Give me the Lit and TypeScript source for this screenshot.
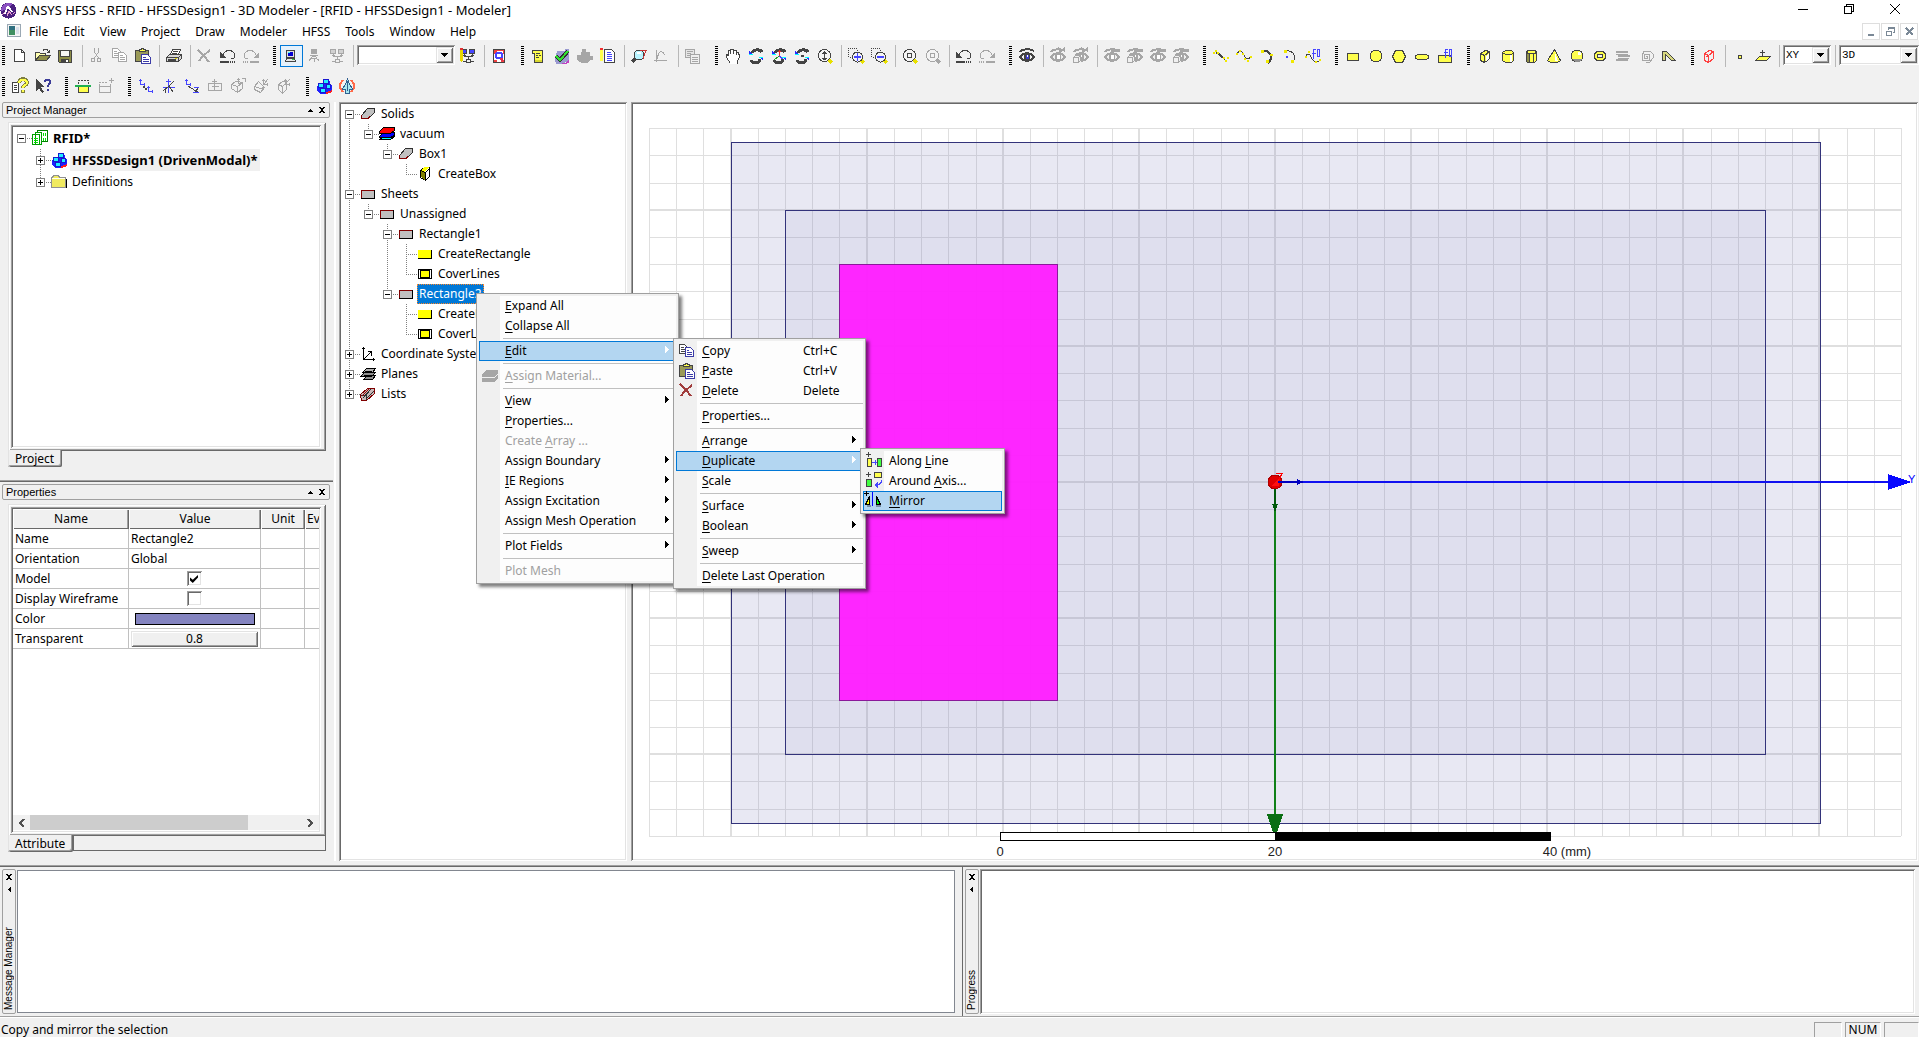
import { LitElement, html, svg, css, nothing } from "lit";
import { customElement, property, state } from "lit/decorators.js";
import { classMap } from "lit/directives/class-map.js";

const K = "#444444";
const G = "#a6a6a6";
const Y = "#ffff4d";
const B = "#4646ff";
const N = "none";

/* One stroked and optionally filled outline on the 16 x 16 icon canvas. */
const p = (d: string, stroke: string = K, fill: string = N, width = 1) =>
  svg`<path d=${d} stroke=${stroke} fill=${fill} stroke-width=${width} />`;

/* A small axis triad: upright and level arms with barbed tips. */
const axes = (x: number, y: number, c: string) =>
  svg`<path d="M${x} ${y - 5}h1v5h4v1h-5zM${x - 1} ${y - 4}h3v1h-3zM${x + 4} ${y - 1}h1v3h-1z" fill=${c} />`;

const eye = (c: string, iris: string, extra: unknown = nothing) => svg`
  ${p("M1 4c2-3 10-4 14-1", c, N, 2)}
  ${p("M1 9c3-5 11-5 14 0c-3 5-11 5-14 0z", c, "#f0f0f0", 2)}
  <circle cx="8" cy="9" r="3" fill=${c} />
  <rect x="7" y="7" width="3" height="4" fill=${iris} />
  <rect x="8" y="7" width="1" height="2" fill="#ffffff" />
  ${extra}`;

const eyeCross = p("M8 0l3 3M15 0l-7 6", G, N, 2);
const eyeBox = svg`<rect x="0" y="7" width="8" height="8" fill="#f0f0f0" />${p("M.5 9.5h5v5h-5zM.5 9.5l2-2h5v5l-2 2M5.5 9.5l2-2", G)}`;

const spin = (extra: unknown) => svg`
  ${p("M4 5c1-4 8-4 10-1", K, N, 3)}
  ${p("M3 12c2 4 9 4 9-1", K, N, 3)}
  <path d="M1 3v4h4z" fill="#2a2aff" /><path d="M1 6h4v1h-4z" fill="#00ffff" />
  <path d="M15 13v-4h-4z" fill="#2a2aff" /><path d="M11 9h4v1h-4z" fill="#00ffff" />
  ${extra}`;

const lens = (extra: unknown, c = K, handle = "#e8e000") => svg`
  ${p("M11 11l4 4", handle, N, 3)}
  <circle cx="7.500" cy="7.500" r="6" stroke=${c} fill="#f4f4f4" />
  ${extra}`;

const undo = (c: string) =>
  svg`${p("M3 7c2-6 10-6 12 0c0 3-2 4-4 4", c)}<path d="M0 4v6h6z" fill=${c} />${p("M0 14h9", c, N, 2)}${p("M10 14h6", c, N, 2)}<path d="M11 13v2M13 13v2M15 13v2" stroke="#f0f0f0" />`;
const redo = (c: string) =>
  svg`${p("M13 7c-2-6-10-6-12 0c0 3 2 4 4 4", c)}<path d="M16 4v6h-6z" fill=${c} />${p("M0 14h6", c, N, 2)}${p("M7 14h9", c, N, 2)}<path d="M1 13v2M3 13v2M5 13v2" stroke="#f0f0f0" />`;

const sheet = (x: number, y: number, c: string) =>
  svg`${p(`M${x}.5 ${y}.5h5l3 3v6h-8z`, c, "#ffffff")}${p(`M${x + 2} ${y + 3}.5h3M${x + 2} ${y + 5}.5h5M${x + 2} ${y + 7}.5h5`, c)}`;

const clipboard = svg`
  ${p("M.5 2.5h13v11h-13z", K, "#9a9a58")}
  ${p("M4.5 3.5v-2h2v-1h2v1h2v2z", K, Y)}
  ${p("M6.5 6.5h6l3 3v6h-9z", "#3c3ca8", "#ffffff")}${p("M8 9.5h3M8 11.5h6M8 13.5h6", "#3c3ca8")}`;

const pcs = (c: string, screen: string) => svg`
  ${p("M1.5 1.5h5v4h-5zM9.5 1.5h5v4h-5z", c, screen)}
  ${p("M4.5 6v2h8v-2M8.5 8v3M3 7.5h3M11 7.5h3", c)}${p("M6.5 11.5h4v3h-4z", c, "#f0f0f0")}${p("M3 13.5h3M11 13.5h3", c)}`;

const molecule = svg`
  <path d="M1 8h6v-5h7v4h2v6l-5 3h-6l-4-3z" fill="#2020ff" />
  <path d="M9 15l7-3v2l-5 2z" fill="#ff2020" />
  <path d="M8 2h4v3h-4zM3 6h4v3h-4zM11 7h4v3h-4zM5 11h4v3h-4z" fill="#20f0ff" />
  ${p("M7.5 1.5h5v4h-5zM2.5 5.5h5v4h-5zM10.5 6.5h4v4h-4zM4.5 10.5h5v4h-5z", "#1818d0")}`;

const zoomBox = (mark: unknown) => svg`
  <path d="M0 0h1v1h-1zM2 0h1v1h-1zM4 0h1v1h-1zM6 0h1v1h-1zM8 0h1v1h-1zM0 2h1v1h-1zM0 4h1v1h-1zM0 6h1v1h-1zM0 8h1v1h-1zM9 2h1v1h-1zM2 9h1v1h-1zM4 9h1v1h-1z" fill=${K} />
  ${p("M13 12l3 3", "#e8e000", N, 3)}<circle cx="9.500" cy="9" r="5" fill="#f4f4f4" stroke=${K} />${mark}`;

const icons: Record<string, unknown> = {
  newFile: p("M2.5 1.5h7l3 3v9h-10zM9.5 1.5v3h3", K, "#ffffff"),
  open: svg`${p("M.5 12.5v-8h4l1 1h5v3", K, "#ffffb0")}${p("M.5 12.5l4-5h11l-4 5z", K, "#90904a")}${p("M8 2.5c2-2 4-2 5.500 1", K)}<path d="M15 1v4h-4z" fill=${K} />`,
  save: svg`${p("M.5 2.500h13v12h-12l-1-1z", K, "#8c8c48")}<path d="M3 3h8v5h-8z" fill="#f6f6f6" />${p("M2.500 3v5.500h9v-5.500", K)}<path d="M3 11h8v3h-8z" fill=${K} /><path d="M8 12h2v2h-2z" fill="#fff" />`,
  cut: svg`${p("M5.500 0v4l4 6M9.500 0v4l-4 6", G)}<circle cx="4" cy="12" r="2" stroke=${G} fill="none" /><circle cx="10" cy="12" r="2" stroke=${G} fill="none" />`,
  copyGrey: svg`${sheet(0, 0, G)}${sheet(6, 4, G)}`,
  copy: svg`${sheet(0, 1, K)}${p("M6.500 4.500h5l3 3v6h-8z", "#3c3ca8", "#ffffff")}${p("M8 7.500h2M8 9.500h5M8 11.500h5", "#3c3ca8")}`,
  paste: clipboard,
  remove: svg`${p("M1 1l6 6l5 6M13 2l-7 6l-4 5", "#a03c3c", N, 2)}`,
  print: svg`${p("M4.500 6.500l2-5h8l-2 5z", K, "#fff")}${p("M7 3.500h5M6 5.500h5", K)}${p("M.500 9.500l3-3h12v4l-3 3h-12z", K, "#d8d8d8")}${p("M.500 9.500h12l3-3M12.500 9.500v4", K)}${p("M2 11.500h8", K, N, 2)}<path d="M9 10h2v1h-2z" fill="#e8e000" />`,
  crossGrey: p("M1 2l6 6l5 6M13 2l-7 6l-4 5", G, N, 2),
  undo: undo(K),
  redo: redo(G),
  pc: svg`${p("M3.500 2.500h8v7h-8z", K, "#e0e0e0")}<path d="M5 4h5v4h-5z" fill="#0000d0" /><path d="M5 4h2v1h-2z" fill="#30ffff" />${p("M2.500 13.500l1-3h8l1 3z", K, "#e8e8e8")}<path d="M9 11h2v1h-2z" fill="#30d040" />`,
  pcWifi: svg`${p("M5.500 1.500h5v4h-5z", G, G)}${p("M4 7.500h8M5 10c1-2 5-2 6 0M3 13c2-4 8-4 10 0M8 10v4", G)}`,
  pcNet: pcs(G, "#d0d0d0"),
  pcEdit: svg`${pcs(K, B)}<path d="M0 2h3v10l-1 3l-2-3z" fill="#e8d800" /><path d="M0 0h3v2h-3z" fill="#e03030" />`,
  opt: svg`${p("M2.500 1.500h11v13h-11z", K, "#fff")}<path d="M3 2h10v1h-7l-2 3h-1zM12 3h1v3h-1zM3 12h3v2h-3zM10 12h3v2h-3z" fill="#f04040" /><circle cx="8" cy="7.500" r="3" stroke=${B} stroke-width="2" fill="#fff" /><path d="M9 10h3v3h-2z" fill="#e03050" />`,
  script: svg`${p("M1.500 2.500h10v12h-8v-9h-2z", K, Y)}${p("M5 5.500h4M5 7.500h2M8 7.500h2M5 9.500h3", K)}<path d="M4 12h7v2h-7z" fill="#d8d830" />`,
  validate: svg`<path d="M3 3h8v-2h4v12l-8 3h-5l-1-5z" fill="#9a9ad0" /><path d="M5 15h6l4-3v3l-4 1z" fill="#c040c0" />${p("M2 8l4 4l8-9", "#303030", N, 4)}${p("M2 8l4 4l8-9", "#30e030", N, 2)}`,
  solveGrey: svg`<path d="M5 1h4v3h4v4h3v4h-3l-3 3h-5l-5-3v-5h4z" fill=${G} />`,
  notes: svg`${p("M4.500 1.500h7l3 3v10h-10z", K, "#fff")}${p("M7 4.500h4M7 6.500h5M7 8.500h5M7 10.500h5M7 12.500h5", B)}<path d="M0 2h3v11h-3z" fill=${Y} /><path d="M0 0h3v2h-3z" fill="#f03030" />`,
  find: svg`${p("M1 14l4-4", K, N, 4)}<circle cx="8" cy="7" r="5" stroke=${K} fill="#b8f4ff" /><path d="M6 4h4v2h-4z" fill="#fff" />${p("M9 2.500h6l-3 8", "#c83838")}`,
  plot: svg`${p("M2.500 2v12M0 12.500h13M3 11c2-9 5-9 8-4", G)}`,
  cascade: svg`${p("M.500 1.500h9v8h-9z", G, "#e6e6e6")}${p("M2 3.500h6M2 5.500h4M2 7.500h3", G)}${p("M5.500 6.500h9v9h-9z", G, "#f0f0f0")}${p("M7 9.500h6M7 11.500h6M7 13.500h6", G)}`,
  hand: p("M5.500 15.500l-4-6v-3l2 1v-5h2v3v-4h3v4v-3h3v4v-2h2l1 4l-2 5v2", K, "#fff"),
  rotate: spin(nothing),
  rotateAxis: spin(svg`${p("M8.500 8v-6M7 3.500h3", "#e03030")}${p("M8 8l-5 4", "#20a020")}${p("M8 8l4 3", B)}`),
  rotateCenter: spin(svg`<path d="M7 7h3v2h-3z" fill=${K} />`),
  zoomDyn: lens(svg`<path d="M7 3h1v1h1v1h1v1h-5v-1h1v-1h1zM7 6h1v4h-1zM5 10h5v1h-1v1h-3v-1h-1z" fill=${K} />`),
  zoomIn: zoomBox(svg`<path d="M6 8h7v2h-7zM9 5h1v8h-1z" fill=${B} />`),
  zoomOut: zoomBox(svg`<path d="M6 8h7v2h-7z" fill=${B} />`),
  fitAll: lens(p("M5.500 5.500h4v4h-4z", K)),
  fitSel: lens(p("M5.500 5.500h4v4h-4z", G), G, G),
  eye: eye(K, "#3c3cc8"),
  eyeX: eye(G, "#ffffff", eyeCross),
  eyeBoxX: eye(G, G, svg`${eyeCross}${eyeBox}`),
  eyeG: eye(G, "#ffffff", p("M7 2h9", G, N, 3)),
  eyeBoxG: eye(G, G, svg`${p("M7 2h9", G, N, 3)}${eyeBox}`),
  line: svg`${p("M3 4l9 7", K, N, 2)}<path d="M0 4h2v2h-2zM2 2h2v2h-2zM4 4h2v2h-2zM10 9h2v2h-2zM12 12h2v2h-2zM14 9h2v2h-2z" fill="#f0e800" />`,
  spline: svg`${p("M1 6c3-6 5-3 7 1s4 6 7 1", K)}<path d="M0 5h2v2h-2zM3 2h2v2h-2zM6 5h2v2h-2zM8 10h2v2h-2zM11 12h2v2h-2zM14 8h2v2h-2z" fill="#f0e800" />`,
  arc3: svg`${p("M4 3c7-1 11 7 5 12", K, N, 2)}<path d="M2 2h3v3h-3zM11 6h3v2h-3zM7 12h3v3h-3z" fill="#f0e800" />`,
  arcC: svg`${p("M4 3c8-1 11 7 6 12", K)}<path d="M2 2h3v3h-3zM9 12h3v3h-3z" fill="#f0e800" /><path d="M4 8h2v2h-2z" fill=${B} />`,
  curveEq: svg`${p("M0 10c2-6 5-4 6-1s4 6 8 4", K)}${p("M8.500 11v-9l2-1M7 5.500h4M12.500 1.500h2v7h-2z", B)}<path d="M0 8h2v2h-2zM3 3h2v2h-2zM10 13h2v2h-2zM14 11h2v2h-2z" fill="#f0e800" />`,
  rect: p("M2.500 5.500h11v7h-11z", K, Y),
  circle: svg`<circle cx="8" cy="8" r="6" stroke=${K} fill=${Y} />`,
  polygon: p("M4.500 2.500h7l3 6l-3 6h-7l-3-6z", K, Y),
  ellipse: svg`<ellipse cx="8" cy="9" rx="7" ry="3" stroke=${K} fill=${Y} />`,
  surfEq: svg`${p("M1.500 7.500h13v7h-13z", K, Y)}${p("M8.500 10v-8l2-1M7 4.500h4M12.500 1.500h2v7h-2z", B)}`,
  box: svg`${p("M3.500 5.500l5-3l4 1v7l-5 4l-4-2z", K, Y)}${p("M3.500 5.500l4 2l5-4M7.500 7.500v7", K)}<path d="M9 8l3-3v5l-3 3z" fill="#fff" />`,
  cylinder: svg`${p("M2.500 4.500l3-2h6l2 2v8l-2 2h-6l-3-2z", K, Y)}${p("M2.500 4.500l3 2h6l2-2", K)}<path d="M10 7h2v7h-2z" fill="#fff" />`,
  prism: svg`${p("M3.500 3.500l2-1h6l2 1v9l-2 2h-6l-2-1z", K, Y)}${p("M3.500 4.500l2 1h6l2-1M6.500 6v8M10.500 6v8", K)}<path d="M4 6h2v8h-2z" fill="#909048" />`,
  cone: svg`${p("M8.500 1.500l6 11l-3 2h-7l-3-2z", K, Y)}<path d="M9 5l3 8h-3z" fill="#fff" />`,
  sphere: svg`<circle cx="8" cy="8" r="6" stroke=${K} fill=${Y} /><path d="M3 11h10l-3 3h-4z" fill="#909090" /><path d="M9 4h3v3h-3z" fill="#fff" />`,
  torus: svg`<ellipse cx="8" cy="8" rx="6" ry="5" stroke=${K} fill=${Y} /><ellipse cx="8" cy="8" rx="3" ry="2" stroke=${K} fill="#f0f0f0" />`,
  stackGrey: svg`${p("M1 4h12M3 8h12M1 12h12", G, N, 2)}${p("M1 6.500h12M3 10.500h11", G)}`,
  spiral: p("M8 8h1v2h-3v-4h5v6h-7v-4l2-5h6l3 3v4l-3 4h-4", G),
  sweep: svg`${p("M1.500 12.500v-9h4l9 9h-4l-6-6v6z", K, "#d8d880")}`,
  boxRed: p("M3.500 5.500l5-3l4 1v7l-5 4l-4-2zM3.500 5.500l4 2l5-4M7.500 7.500v7M5.500 9l4-3", "#ff4040"),
  point: p("M6.500 7.500h3v3h-3z", K, Y),
  plane: svg`${p("M4.500 8.500h11l-4 4h-11z", K, Y)}${p("M7.500 9v-7M5 4.500h5", K)}`,
  help: svg`${p("M.500 4.500h6v10h-6z", K, "#fff")}${p("M2 7.500h3M2 9.500h3M2 11.500h3", K)}${p("M7 5c0-5 8-5 8 0c0 2-4 2-4 5M11 12v3", "#808040", N, 4)}${p("M7 5c0-4 8-4 8 0c0 2-4 2-4 5M11 12v2", Y, N, 2)}`,
  whatsThis: svg`<path d="M1 1v12l3-3l3 5l2-1l-3-5h4z" fill=${K} />${p("M10 4c0-3 5-3 5 0c0 2-2 2-2 5M13 11v2", "#3c3c98", N, 2)}`,
  region: svg`<path d="M4 9h10v6h-10z" fill=${Y} />${p("M3 14.500h10.500v-5.500M3.500 9v5", K)}<path d="M3 2h2v1h-2zM6 2h2v1h-2zM9 2h2v1h-2zM12 2h2v1h-2zM3 4h1v2h-1zM13 4h1v2h-1z" fill=${K} />${p("M0 8h16", "#20b050", N, 2)}`,
  regionGrey: svg`${p("M1.500 14.500h11v-6h-11z", G)}<path d="M1 4h2v1h-2zM4 4h2v1h-2zM7 4h2v1h-2zM1 6h1v2h-1zM12 6h1v2h-1zM13 0h1v5h-1zM11 2h5v1h-5z" fill=${G} />`,
  cs1: svg`${axes(2, 6, B)}${axes(10, 13, B)}<path d="M5 8h2v2h-2zM7 10h2v2h-2z" fill=${K} />`,
  cs2: svg`<path d="M7 1h1v14h-1zM5 3h5v1h-5zM2 9h12v1h-12z" fill=${B} />${p("M2 13l6-5M8 8l5-5M8 8l4 6M4.500 11v4", K)}`,
  cs3: svg`${axes(2, 6, B)}${p("M4 8l11 7M15 9l-5 6", K)}<path d="M10 9h5v1h-5zM9 14h6v1h-6z" fill=${B} />`,
  cs4: svg`${p("M1.500 5.500h13v7h-13z", G)}<path d="M7 1h1v11h-1zM5 3h5v1h-5zM5 8h7v1h-7z" fill=${G} />`,
  cs5: svg`${p("M1.500 6.500l4-3h4l3 2v5l-5 4l-6-4zM1.500 6.500l6 2l4-3M7.500 8.500v6", G)}${axes(8, 5, G)}<path d="M12 0h4v1h-4zM15 0h1v4h-1z" fill=${G} />`,
  cs6: svg`${p("M1.500 8.500l4-5l6 6l-4 5l-6-3zM1.500 8.500l6 2l4-1M11 6l4-5", G)}${axes(10, 6, G)}`,
  cs7: svg`${p("M2.500 6.500l4-3h4v8l-4 4l-4-4zM2.500 6.500l4 2l4-4M6.500 8.500v6M6 9l8-8", G)}${axes(9, 6, G)}`,
  molecule,
  jet: svg`${p("M4 2l-3 4v4l3 4M12 2l3 4v4l-3 4", "#ff6a4a", N, 2)}${p("M8.500 1l2 5l3 5h-3v4h-4v-4h-3l3-5z", "#306090", "#a8e8f0")}${p("M8.500 3v10", "#306090")}`,
  project: svg`${p("M5.500 .500h10v11h-10z", "#008000", "#ffffff")}${p("M3.500 2.500h6v12h-6zM.500 4.500h7v10h-7z", "#00a000", "#ffffff")}${p("M2 8.500h4M2 10.500h4M2 12.500h4M11.500 3v3M13.500 3v3M11.500 8v3M13.500 8v3", "#00e000")}`,
  folder: svg`<path d="M2 14h14v-9h-1z" fill="#000" />${p("M.500 3.500h1l1-2h5l1 2h6v10h-14z", "#909090", "#f0ea60")}<path d="M1 4h13v1h-13z" fill="#fffff0" />`,
  solid: svg`${p("M1.500 12.500v-3l6-7h7v4l-6 6z", "#303030", "#c0c0c0")}${p("M1.500 13v-4M1 12.500h7l2-2", "#800000")}`,
  vacuum: svg`${p("M.500 13.500l4-3h11l-4 3z", "#000", "#00ffff")}${p("M.500 10.500l4-4h11v3l-4 2h-11z", "#000", "#0000ff")}${p("M.500 5.500l4-4h11v3l-4 3h-11z", "#000", "#ff0000")}`,
  createBox: svg`${p("M3.500 4.500l4-3h5v9l-4 4l-5-3z", "#000", "#fff")}<path d="M4 5l4 2v7l-4-3z" fill="#808000" /><path d="M4 4l4-3h4l-4 5z" fill="#ffff00" />${p("M3.500 4.500l5 2l4-4M8.500 6.500v8", "#000")}`,
  sheet: svg`<path d="M1 4h14v9h-14z" fill="#000" /><path d="M1 4h13v8h-13z" fill="#800000" /><path d="M2 5h12v7h-12z" fill="#c0c0c0" />`,
  createRect: svg`<path d="M1 4h14v9h-14z" fill="#000" /><path d="M1 4h13v8h-13z" fill="#ffff00" />`,
  cover: svg`<path d="M1 3h14v10h-14z" fill="#000" /><path d="M2 4h12v8h-12z" fill="#fff" /><path d="M3 4h10v8h-10z" fill="#000" /><path d="M4 5h8v6h-8z" fill="#ffff00" />`,
  coords: svg`<path d="M3 1h1v12h11v1h-12zM2 2h3v1h-3zM13 12h1v3h-1z" fill="#000" />${p("M4 13l7-7M8 5.500h3.500v4", "#000")}`,
  planes: svg`${p("M3.500 13.500l4-4h8l-3 4zM.500 10.500l4-4h11l-4 4z", "#000", "#909090")}${p("M2.500 6.500l4-4h9l-3 4z", "#000", "#b0b0b0")}${p("M5 5.500h7M4 9h8", "#000")}`,
  lists: svg`${p("M.500 8.500l7-6h7v5l-8 7h-5z", "#800000", "#c8b8b8")}${p("M3 12l8-9M6 13l8-8M1 9h5v5", "#303030")}${p("M2 10l7-7", "#a00000")}`,
  materialGrey: svg`<path d="M0 7l4-5h12v3l-4 4h-12zM0 14v-4h12l4-4v4l-4 4z" fill=${G} />`,
  alongLine: svg`<path d="M2 -1h1v5h-1zM0 1h5v1h-5z" fill=${K} />${p("M1.500 5.500h4v8h-4z", K, Y)}${p("M11.500 5.500h4v8h-4z", K, "#40ff40")}<path d="M6 9h5v1h-5zM9 7h1v5h-1z" fill=${B} />`,
  aroundAxis: svg`<path d="M2 -1h1v5h-1zM0 1h5v1h-5z" fill=${K} />${p("M8.500 -.500h7v5h-7z", K, Y)}${p("M.500 6.500h5v7h-5z", K, "#40ff40")}${p("M15.500 7c0 4-3 5-6 5", B)}<path d="M8 12l4-3v6z" fill=${B} />`,
  mirror: svg`<path d="M3 12h4v2h-4zM12 12h5v2h-5z" fill="#7890a8" />${p("M5.500 3.500v8h-4z", "#000", "#ffff00")}${p("M12.500 3.500v8h4z", "#000", "#00ff00")}<path d="M2 -2h1v5h-1zM0 0h5v1h-5z" fill="#000" /><path d="M8 -1h1v14h-1z" fill="#0000ff" />`,
};

const icon = (name: string) =>
  html`<svg class="icon" viewBox="0 0 16 16" aria-hidden="true">${icons[name]}</svg>`;

const caret = svg`<path d="M0 0h7v1h-1v1h-1v1h-1v1h-1v-1h-1v-1h-1v-1h-1z" fill="#000" />`;

const shared = css`
  * {
    box-sizing: border-box;
  }
  button,
  select,
  input {
    font: inherit;
    color: inherit;
    margin: 0;
    padding: 0;
    border: 0;
    background: none;
    border-radius: 0;
  }
  ul {
    list-style: none;
    margin: 0;
    padding: 0;
  }
  svg {
    display: block;
    shape-rendering: crispEdges;
    fill: none;
    flex: none;
  }
  .icon {
    width: 16px;
    height: 16px;
    overflow: visible;
  }
  .sunken {
    padding: 2px;
    background: #fff;
    box-shadow: inset 1px 1px #a0a0a0, inset -1px -1px #fff, inset 2px 2px #696969,
      inset -2px -2px #e3e3e3;
  }
  .raised {
    background: #f0f0f0;
    box-shadow: inset 1px 1px #e3e3e3, inset -1px -1px #696969, inset 2px 2px #fff,
      inset -2px -2px #a0a0a0;
  }
`;

type Tool = string | { options: string[]; label: string; kind: string };

const toolRows: Tool[][][] = [
  [
    ["newFile", "open", "save", "|", "cut", "copyGrey", "paste", "|", "print", "|", "crossGrey", "undo", "redo"],
    ["pc", "pcWifi", "pcNet", "|", { options: [""], label: "Machine", kind: "wide" }, "pcEdit", "|", "opt"],
    ["script", "validate", "solveGrey", "notes", "|", "find", "plot", "|", "cascade"],
    ["hand", "rotate", "rotateAxis", "rotateCenter", "zoomDyn", "|", "zoomIn", "zoomOut", "|", "fitAll", "fitSel", "|", "undo", "redo"],
    ["eye", "|", "eyeX", "eyeBoxX", "|", "eyeG", "eyeBoxG", "eyeG", "eyeBoxG"],
    ["line", "spline", "arc3", "arcC", "curveEq"],
    ["rect", "circle", "polygon", "ellipse", "surfEq"],
    ["box", "cylinder", "prism", "cone", "sphere", "torus", "stackGrey", "spiral", "sweep"],
    [
      "boxRed", "|", "point", "plane", "|",
      { options: ["XY", "YZ", "XZ"], label: "Drawing plane", kind: "plane" }, "|",
      { options: ["3D", "In Plane", "Out of Plane"], label: "Movement mode", kind: "mode" },
    ],
  ],
  [
    ["help", "whatsThis"],
    ["region", "regionGrey"],
    ["cs1", "cs2", "cs3", "cs4", "cs5", "cs6", "cs7"],
    ["molecule", "jet"],
  ],
];

@customElement("tool-bars")
export class ToolBars extends LitElement {
  static styles = [
    shared,
    css`
      :host {
        display: block;
        background: #f1f1f1;
      }
      .row {
        display: flex;
        gap: 10px;
        height: 30px;
        padding-left: 2px;
        align-items: center;
      }
      .row:first-child {
        height: 31px;
      }
      .group {
        display: flex;
        align-items: center;
        flex: none;
      }
      .group.last {
        flex: 1 1 auto;
      }
      .grip {
        flex: none;
        width: 3px;
        height: 19px;
        margin-right: 4px;
        background: repeating-linear-gradient(#000 0 1px, transparent 1px 2px);
      }
      .tool {
        display: flex;
        flex: none;
        width: 23px;
        height: 22px;
        padding: 3px 4px 3px 3px;
      }
      .tool.on {
        padding: 2px 3px 2px 2px;
        border: 1px solid #0078d7;
        background: #e5f1fb;
      }
      .sep {
        flex: none;
        width: 1px;
        height: 22px;
        margin: 0 3px 0 4px;
        background: #b8b8b8;
      }
      .combo {
        display: grid;
        flex: none;
        height: 20px;
        font: 11px "Liberation Mono", monospace;
        margin-bottom: 2px;
      }
      .combo select {
        grid-area: 1 / 1;
        width: 100%;
        min-width: 0;
        appearance: none;
        padding: 2px 20px 2px 3px;
      }
      .combo .drop {
        grid-area: 1 / 1;
        justify-self: end;
        width: 17px;
        height: 16px;
        margin: 2px;
        padding: 6px 5px;
        pointer-events: none;
      }
      .wide {
        width: 98px;
        margin-right: 2px;
      }
      .plane {
        width: 48px;
      }
      .mode {
        flex: 1 1 0;
        min-width: 0;
      }
    `,
  ];

  private tool(t: Tool) {
    if (t === "|") return html`<span class="sep"></span>`;
    if (typeof t === "string") {
      return html`<button class=${classMap({ tool: true, on: t === "pc" })} aria-label=${t}>${icon(t)}</button>`;
    }
    return html`<label class="combo ${t.kind}">
      <select class="sunken" aria-label=${t.label}>
        ${t.options.map((o) => html`<option>${o}</option>`)}
      </select>
      <span class="drop raised"><svg width="7" height="4" viewBox="0 0 7 4">${caret}</svg></span>
    </label>`;
  }

  render() {
    return toolRows.map(
      (row, r) => html`<div class="row" role="toolbar">
        ${row.map(
          (g, i) => html`<div class=${classMap({ group: true, last: r === 0 && i === row.length - 1 })}>
            <span class="grip"></span>${g.map((t) => this.tool(t))}
          </div>`
        )}
      </div>`
    );
  }
}

/* guides: one letter per ancestor column, "|" a passing line, " " empty;
   joint: t = line above, b = line below; box: "+", "-" or "" */
interface Row {
  guides: string;
  joint: string;
  box: string;
  icon: string;
  text: string;
  bold?: boolean;
  state?: string;
}

@customElement("tree-view")
export class TreeView extends LitElement {
  static styles = [
    shared,
    css`
      :host {
        display: block;
        overflow: hidden;
      }
      .node {
        display: flex;
        height: 20px;
        align-items: center;
        white-space: nowrap;
      }
      .tall {
        height: 22px;
      }
      .guide {
        width: 19px;
        height: 100%;
      }
      .icon {
        margin-right: 3px;
      }
      .label {
        align-self: stretch;
        display: flex;
        align-items: center;
        padding: 0 2px;
      }
      .bold {
        font-size: 13px;
        font-weight: 700;
      }
      .selected {
        background: #0078d7;
        color: #fff;
        outline: 1px dotted #ff8728;
        outline-offset: -1px;
      }
      .shaded {
        background: #f0f0f0;
      }
    `,
  ];

  @property({ attribute: false }) rows: Row[] = [];
  @property({ type: Boolean }) tall = false;

  private guide(vertical: string, node?: Row) {
    const h = this.tall ? 22 : 20;
    const m = h / 2;
    const top = vertical.includes("t") ? 0 : m;
    const bottom = vertical.includes("b") ? h : m;
    const dots = "1 1";
    return svg`<svg class="guide" viewBox="0 0 19 ${h}">
      ${top < bottom ? svg`<path d="M8.500 ${top}V${bottom}" stroke="#808080" stroke-dasharray=${dots} />` : nothing}
      ${node ? svg`<path d="M8 ${m}.500H19" stroke="#808080" stroke-dasharray=${dots} />` : nothing}
      ${node && node.box
        ? svg`<rect x="4.500" y="${m - 4}.500" width="8" height="8" fill="#fff" stroke="#808080" />
            <path d="M6 ${m}.500h5" stroke="#000" />${node.box === "+" ? svg`<path d="M8.500 ${m - 2}v5" stroke="#000" />` : nothing}`
        : nothing}
    </svg>`;
  }

  render() {
    return html`<ul role="tree">
      ${this.rows.map(
        (n) => html`<li class=${classMap({ node: true, tall: this.tall })} role="treeitem">
          ${[...n.guides].map((g) => this.guide(g === "|" ? "tb" : ""))}${this.guide(n.joint, n)}${icon(n.icon)}
          <span class=${classMap({ label: true, bold: !!n.bold, selected: n.state === "selected", shaded: n.state === "shaded" })}>${n.text}</span>
        </li>`
      )}
    </ul>`;
  }
}

interface Entry {
  text: string;
  key?: number;
  icon?: string;
  shortcut?: string;
  more?: boolean;
  off?: boolean;
  hot?: boolean;
}

@customElement("popup-menu")
export class PopupMenu extends LitElement {
  static styles = [
    shared,
    css`
      :host {
        display: block;
      }
      .menu {
        padding: 2px;
        border: 1px solid #a0a0a0;
        background: #f0f0f0;
        box-shadow: 3px 3px 3px rgba(0, 0, 0, 0.5);
      }
      .list {
        background: linear-gradient(90deg, #f0f0f0 21px, #fdfdfd 21px);
      }
      .entry {
        display: flex;
        width: 100%;
        height: 20px;
        padding: 0 7px 0 3px;
        align-items: center;
        text-align: left;
        white-space: pre;
      }
      .hot {
        padding: 0 6px 0 2px;
        border: 1px solid #0078d7;
        background: #b3d6f1;
      }
      .off {
        color: #a0a0a0;
      }
      .slot {
        flex: none;
        width: 23px;
      }
      .hot .icon {
        margin-left: -2px;
      }
      .name {
        flex: 1;
      }
      .shortcut {
        width: 53px;
      }
      u {
        text-underline-offset: 2px;
        text-decoration-thickness: 1px;
        text-decoration-skip-ink: none;
      }
      .rule {
        height: 1px;
        margin: 2px 0 2px 24px;
        background: #c0c0c0;
      }
      .arrow {
        width: 4px;
        height: 7px;
        margin-bottom: 4px;
      }
    `,
  ];

  @property({ attribute: false }) entries: Entry[] = [];

  private name(e: Entry) {
    if (e.key === undefined) return html`${e.text}`;
    return html`${e.text.slice(0, e.key)}<u>${e.text[e.key]}</u>${e.text.slice(e.key + 1)}`;
  }

  render() {
    return html`<div class="menu">
      <ul class="list" role="menu">
        ${this.entries.map((e) =>
          e.text === "|"
            ? html`<li class="rule" role="separator"></li>`
            : html`<li role="none">
                <button class=${classMap({ entry: true, off: !!e.off, hot: !!e.hot })} role="menuitem" ?disabled=${e.off}>
                  <span class="slot">${e.icon ? icon(e.icon) : nothing}</span><span class="name">${this.name(e)}</span>${e.shortcut
                    ? html`<span class="shortcut">${e.shortcut}</span>`
                    : nothing}${e.more
                    ? html`<svg class="arrow" viewBox="0 0 4 7"><path d="M0 0h1v1h1v1h1v1h1v1h-1v1h-1v1h-1v1h-1z" fill=${e.hot ? "#fff" : "#000"} /></svg>`
                    : nothing}
                </button>
              </li>`
        )}
      </ul>
    </div>`;
  }
}

/* The modeller canvas: one grid cell is UNIT wide, origin in the middle. */
const UNIT = 27.22;
const at = (cells: number) => Math.round(cells * UNIT);

@customElement("model-canvas")
export class ModelCanvas extends LitElement {
  static styles = [
    shared,
    css`
      :host {
        display: block;
        overflow: hidden;
      }
      .canvas {
        width: 100%;
        height: 100%;
      }
      .label {
        font: 13px "Liberation Sans", Arial, sans-serif;
        fill: #222;
        text-anchor: middle;
      }
      .axis {
        font: 11px "Liberation Sans", Arial, sans-serif;
      }
    `,
  ];

  private plate(x: number, y: number, cols: number, rows: number, fill: string, alpha: number, edge: string) {
    return svg`<rect x=${at(x) + 0.5} y=${at(y) + 0.5} width=${at(cols)} height=${at(rows)}
      fill=${fill} fill-opacity=${alpha} stroke=${edge} />`;
  }

  render() {
    const cols = Array.from({ length: 47 }, (_, i) => i - 23);
    const rows = Array.from({ length: 27 }, (_, i) => i - 13);
    const w = (i: number) => (i % 5 === 0 ? 2 : 1);
    const snap = (i: number) => at(i) + (w(i) === 1 ? 0.5 : 0);
    return html`<svg class="canvas" viewBox="-642 -378 1283 755" role="img" aria-label="Model view">
      <g stroke="#dfdfdf">
        ${cols.map((i) => svg`<path d="M${snap(i)} ${at(-13)}V${at(13)}" stroke-width=${w(i)} />`)}
        ${rows.map((i) => svg`<path d="M${at(-23)} ${snap(i)}H${at(23)}" stroke-width=${w(i)} />`)}
      </g>
      ${this.plate(-20, -12.5, 40, 25, "#8484c0", 0.19, "#33337a")}
      ${this.plate(-18, -10, 36, 20, "#8080b4", 0.08, "#33337a")}
      ${this.plate(-16, -8, 8, 16, "#ff1eff", 0.96, "#8a1a9a")}
      <path d="M0 0H615" stroke="#1010f0" stroke-width="2" />
      <path d="M613 -8L636 0L613 8z" fill="#0808ff" />
      <text class="axis" x="633" y="1" fill="#0000ff">Y</text>
      <path d="M0 0V335" stroke="#108018" stroke-width="2" />
      <path d="M-8 332H8L2 351H-2z" fill="#0a6e14" />
      <path d="M0 0V28" stroke="#005a0a" stroke-width="2" />
      <path d="M-3 22H3L0 30z" fill="#005a0a" />
      <circle cx="0" cy="0" r="7" fill="#e00000" stroke="#b00000" />
      <path d="M-4 4L4 -4L4 4z" fill="#ff1010" />
      <path d="M1 -8.500h6l-3 6" stroke="#ff0000" />
      <path d="M3 0H26" stroke="#0000c0" stroke-width="2" />
      <path d="M22 -3L29 0L22 3z" fill="#0000c0" />
      <rect x="-274.500" y="350.500" width="275" height="8" fill="#fff" stroke="#000" />
      <rect x="0" y="350" width="276" height="9" fill="#000" />
      <text class="label" x="-275" y="374">0</text>
      <text class="label" x="0" y="374">20</text>
      <text class="label" x="292" y="374">40 (mm)</text>
    </svg>`;
  }
}

const closeGlyph = svg`<path d="M0 0h2v1h2v-1h2v1h-1v1h-1v2h1v1h1v1h-2v-1h-2v1h-2v-1h1v-1h1v-2h-1v-1h-1z" fill="#000" />`;

@customElement("app-root")
export class AppRoot extends LitElement {
  static styles = [
    shared,
    css`
      :host {
        display: flex;
        flex-direction: column;
        position: relative;
        height: 100vh;
        overflow: hidden;
        background: #f0f0f0;
        color: #000;
        font: 12px/16px "Noto Sans", "Open Sans", sans-serif;
      }
      .title {
        display: flex;
        height: 20px;
        align-items: center;
        gap: 5px;
        background: #fff;
      }
      .caption {
        flex: 1;
        margin: 0;
        font-size: 13px;
        font-weight: 400;
      }
      .window-buttons {
        display: flex;
        padding-right: 1px;
      }
      .window-buttons button {
        width: 46px;
        height: 20px;
        padding: 4px 17px 5px 18px;
      }
      .menubar {
        display: flex;
        height: 20px;
        padding-left: 7px;
        align-items: center;
        gap: 8px;
        background: #fff;
      }
      .menus {
        display: flex;
        flex: 1;
        gap: 15px;
        padding-top: 4px;
      }
      .mdi {
        display: flex;
        gap: 1px;
        padding: 3px 1px 0 0;
      }
      .mdi button {
        width: 18px;
        height: 17px;
        padding: 3px 4px;
        border: 1px solid #dedede;
      }
      .work {
        display: flex;
        flex: 1;
        min-height: 0;
        padding: 1px 1px 4px 0;
      }
      .left {
        display: flex;
        flex-direction: column;
        width: 333px;
        margin-bottom: -4px;
      }
      .dock {
        display: flex;
        flex-direction: column;
        flex: 1;
        min-height: 0;
        padding: 0 3px 0 2px;
      }
      .dock.upper {
        flex: 0 0 379px;
        border-bottom: 1px solid #a0a0a0;
        padding-bottom: 13px;
      }
      .dock.lower {
        border-top: 1px solid #696969;
        padding-top: 2px;
        padding-bottom: 13px;
      }
      .dock-title {
        display: flex;
        height: 16px;
        align-items: center;
        gap: 6px;
        padding: 0 4px 0 3px;
        border: 1px solid #a0a0a0;
        border-radius: 2px;
        font: 11px/14px "Liberation Sans", Arial, sans-serif;
      }
      .dock-title span {
        flex: 1;
      }
      .frame {
        flex: 1;
        min-height: 0;
        display: flex;
        flex-direction: column;
        margin: 4px 4px 0 6px;
        padding: 3px 5px 3px 3px;
      }
      .field {
        flex: 1;
        min-height: 0;
        display: flex;
        flex-direction: column;
      }
      .tabs {
        display: flex;
        margin: 0 4px 0 6px;
        align-items: flex-start;
      }
      .tab {
        height: 17px;
        margin-top: -1px;
        padding: 0 8px 0 7px;
        background: #f0f0f0;
        border-radius: 0 0 2px 2px;
        box-shadow: inset 1px 0 #e3e3e3, inset -1px -1px #696969, inset -2px -2px #a0a0a0;
      }
      .tab-fill {
        flex: 1;
        height: 15px;
        border: 1px solid #696969;
        border-top: 0;
      }
      .edge {
        width: 3px;
        margin-right: 3px;
        border-right: 2px solid #fff;
      }
      .history {
        width: 288px;
        margin-right: 4px;
      }
      .view {
        flex: 1;
        min-width: 0;
      }
      .grid-wrap {
        flex: 1;
        overflow: hidden;
      }
      table {
        width: 352px;
        table-layout: fixed;
        border-collapse: separate;
        border-spacing: 0;
      }
      th {
        height: 20px;
        padding: 0;
        font-weight: 400;
        background: #f0f0f0;
        box-shadow: inset 1px 1px #fff, inset -1px -1px #696969, inset -2px 0 #a0a0a0;
      }
      th.cut {
        text-align: left;
        padding-left: 2px;
      }
      td {
        height: 20px;
        padding: 0 2px;
        border-right: 1px solid #c0c0c0;
        border-bottom: 1px solid #c0c0c0;
      }
      .check {
        appearance: none;
        display: block;
        width: 15px;
        height: 15px;
        margin: 0 auto;
        padding: 4px 3px;
      }
      .check:checked::before {
        content: "";
        display: block;
        width: 8px;
        height: 8px;
        background: #000;
        clip-path: polygon(0 30%, 35% 60%, 100% 0, 100% 30%, 35% 100%, 0 70%);
      }
      .swatch {
        display: block;
        width: 120px;
        height: 12px;
        margin: 0 4px;
        border: 1px solid #000;
        background: #8484c0;
      }
      .amount {
        display: block;
        width: 100%;
        height: 16px;
        line-height: 14px;
      }
      .scroll {
        display: flex;
        height: 15px;
        margin-bottom: 1px;
        background: #f0f0f0;
      }
      .scroll button {
        width: 17px;
        padding: 4px 5px;
      }
      .track {
        flex: 1;
      }
      .thumb {
        width: 80%;
        height: 15px;
        background: #cdcdcd;
      }
      .bottom {
        display: flex;
        height: 152px;
        border-top: 1px solid #a0a0a0;
        border-bottom: 1px solid #a0a0a0;
        box-shadow: inset 0 1px #696969;
      }
      .pane {
        display: flex;
        gap: 1px;
        padding: 3px 7px 2px 2px;
      }
      .pane.messages {
        flex: 0 0 calc(50% + 3px);
        border-right: 1px solid #696969;
      }
      .pane.progress {
        flex: 1;
        padding-right: 4px;
      }
      .strip {
        display: flex;
        flex-direction: column;
        align-items: center;
        gap: 7px;
        width: 14px;
        padding: 4px 0 3px;
        border: 1px solid #a0a0a0;
        border-radius: 2px;
      }
      .strip span {
        flex: 1;
        writing-mode: vertical-rl;
        rotate: 180deg;
        font: 10px/12px "Liberation Sans", Arial, sans-serif;
      }
      .log {
        flex: 1;
        background: #fff;
      }
      .log.flat {
        margin: 1px 0;
        border: 1px solid #828790;
      }
      .status {
        display: flex;
        height: 20px;
        padding: 4px 0 0 1px;
        gap: 3px;
        border-top: 1px solid #fff;
        line-height: 14px;
      }
      .status .hint {
        flex: 1;
        padding-top: 1px;
      }
      .cell {
        width: 28px;
        height: 15px;
        border: 1px solid #a0a0a0;
        border-right-color: #fff;
        border-bottom: 0;
      }
      .cell.num {
        width: 36px;
        text-align: center;
      }
      .cell.end {
        width: 35px;
      }
      popup-menu {
        position: absolute;
      }
      .context {
        left: 476px;
        top: 293px;
        width: 203px;
      }
      .edit {
        left: 673px;
        top: 338px;
        width: 193px;
      }
      .duplicate {
        left: 860px;
        top: 448px;
        width: 145px;
      }
    `,
  ];

  @state() private showModel = true;

  private projectRows: Row[] = [
    { guides: "", joint: "", box: "-", icon: "project", text: "RFID*", bold: true },
    { guides: " ", joint: "tb", box: "+", icon: "molecule", text: "HFSSDesign1 (DrivenModal)*", bold: true, state: "shaded" },
    { guides: " ", joint: "t", box: "+", icon: "folder", text: "Definitions" },
  ];

  private historyRows: Row[] = [
    { guides: "", joint: "b", box: "-", icon: "solid", text: "Solids" },
    { guides: "|", joint: "t", box: "-", icon: "vacuum", text: "vacuum" },
    { guides: "| ", joint: "t", box: "-", icon: "solid", text: "Box1" },
    { guides: "|  ", joint: "t", box: "", icon: "createBox", text: "CreateBox" },
    { guides: "", joint: "tb", box: "-", icon: "sheet", text: "Sheets" },
    { guides: "|", joint: "t", box: "-", icon: "sheet", text: "Unassigned" },
    { guides: "| ", joint: "tb", box: "-", icon: "sheet", text: "Rectangle1" },
    { guides: "| |", joint: "tb", box: "", icon: "createRect", text: "CreateRectangle" },
    { guides: "| |", joint: "t", box: "", icon: "cover", text: "CoverLines" },
    { guides: "| ", joint: "t", box: "-", icon: "sheet", text: "Rectangle2", state: "selected" },
    { guides: "|  ", joint: "tb", box: "", icon: "createRect", text: "CreateRectangle" },
    { guides: "|  ", joint: "t", box: "", icon: "cover", text: "CoverLines" },
    { guides: "", joint: "tb", box: "+", icon: "coords", text: "Coordinate Systems" },
    { guides: "", joint: "tb", box: "+", icon: "planes", text: "Planes" },
    { guides: "", joint: "t", box: "+", icon: "lists", text: "Lists" },
  ];

  private contextEntries: Entry[] = [
    { text: "Expand All", key: 0 },
    { text: "Collapse All", key: 0 },
    { text: "|" },
    { text: "Edit", key: 0, more: true, hot: true },
    { text: "|" },
    { text: "Assign Material...", key: 0, off: true, icon: "materialGrey" },
    { text: "|" },
    { text: "View", key: 0, more: true },
    { text: "Properties...", key: 0 },
    { text: "Create Array ...", key: 7, off: true },
    { text: "Assign Boundary", more: true },
    { text: "IE Regions", key: 0, more: true },
    { text: "Assign Excitation", more: true },
    { text: "Assign Mesh Operation", more: true },
    { text: "|" },
    { text: "Plot Fields", more: true },
    { text: "|" },
    { text: "Plot Mesh", off: true },
  ];

  private editEntries: Entry[] = [
    { text: "Copy", key: 0, icon: "copy", shortcut: "Ctrl+C" },
    { text: "Paste", key: 0, icon: "paste", shortcut: "Ctrl+V" },
    { text: "Delete", key: 0, icon: "remove", shortcut: "Delete" },
    { text: "|" },
    { text: "Properties...", key: 0 },
    { text: "|" },
    { text: "Arrange", key: 0, more: true },
    { text: "Duplicate", key: 0, more: true, hot: true },
    { text: "Scale", key: 0 },
    { text: "|" },
    { text: "Surface", key: 0, more: true },
    { text: "Boolean", key: 0, more: true },
    { text: "|" },
    { text: "Sweep", key: 0, more: true },
    { text: "|" },
    { text: "Delete Last Operation", key: 0 },
  ];

  private duplicateEntries: Entry[] = [
    { text: "Along Line", key: 6, icon: "alongLine" },
    { text: "Around Axis...", key: 7, icon: "aroundAxis" },
    { text: "Mirror", key: 0, icon: "mirror", hot: true },
  ];

  private dockTitle(text: string) {
    return html`<div class="dock-title">
      <span>${text}</span>
      <button aria-label="Collapse"><svg width="5" height="3" viewBox="0 0 5 3"><path d="M0 3v-1h1v-1h1v-1h1v1h1v1h1v1z" fill="#000" /></svg></button>
      <button aria-label="Close"><svg width="6" height="6" viewBox="0 0 6 6">${closeGlyph}</svg></button>
    </div>`;
  }

  private strip(text: string) {
    return html`<div class="strip">
      <button aria-label="Close"><svg width="6" height="6" viewBox="0 0 6 6">${closeGlyph}</svg></button>
      <button aria-label="Collapse"><svg width="3" height="5" viewBox="0 0 3 5"><path d="M3 0v5h-1v-1h-1v-1h-1v-1h1v-1h1v-1z" fill="#000" /></svg></button>
      <span>${text}</span>
    </div>`;
  }

  render() {
    const menus = ["File", "Edit", "View", "Project", "Draw", "Modeler", "HFSS", "Tools", "Window", "Help"];
    return html`
      <header>
        <div class="title">
          <svg width="17" height="17" viewBox="0 0 17 17">
            <circle cx="8.500" cy="8.500" r="8" fill="#4a2080" />
            <path d="M1 9a8 8 0 0 1 12-7l-6 5z" fill="#8a50c0" />
            <path d="M4 12l3-8h2l4 6h-2l-3-4l-2 6z" fill="#fff" />
            <path d="M2 13l3-3M7 14l2-5l3 4M13 12l2-2" stroke="#e8a0d0" />
          </svg>
          <h1 class="caption">ANSYS HFSS - RFID - HFSSDesign1 - 3D Modeler - [RFID - HFSSDesign1 - Modeler]</h1>
          <div class="window-buttons">
            <button aria-label="Minimize"><svg width="11" height="11" viewBox="0 0 11 11"><path d="M0 5.500h10" stroke="#000" /></svg></button>
            <button aria-label="Restore"><svg width="11" height="11" viewBox="0 0 11 11"><path d="M.500 2.500h7v7h-7zM2.500 2v-1.500h7v7h-1.500" stroke="#000" /></svg></button>
            <button aria-label="Close"><svg width="11" height="11" viewBox="0 0 11 11"><path d="M0 0l10 10M10 0l-10 10" stroke="#000" /></svg></button>
          </div>
        </div>
        <nav class="menubar">
          <svg width="14" height="13" viewBox="0 0 14 13">
            <rect x=".500" y=".500" width="13" height="12" fill="#f4f4f4" stroke="#9aa8b4" />
            <path d="M2 2h6v9h-6z" fill="#2f6f80" /><path d="M2 6h6v5h-6z" fill="#3f8f60" /><path d="M9 3h3v7h-3z" fill="#d8e0ea" />
          </svg>
          <div class="menus">${menus.map((m) => html`<button>${m}</button>`)}</div>
          <div class="mdi">
            <button aria-label="Minimize child"><svg width="9" height="9" viewBox="0 0 9 9"><path d="M1 8h6" stroke="#7a8896" stroke-width="2" /></svg></button>
            <button aria-label="Restore child"><svg width="9" height="9" viewBox="0 0 9 9"><path d="M.500 4.500h5v4h-5zM2.500 3v-2.500h6v5h-2M2 1h6M0 4h6" stroke="#7a8896" /></svg></button>
            <button aria-label="Close child"><svg width="9" height="9" viewBox="0 0 9 9"><path d="M1 1l7 7M8 1l-7 7" stroke="#7a8896" stroke-width="2" /></svg></button>
          </div>
        </nav>
        <tool-bars></tool-bars>
      </header>

      <main class="work">
        <div class="left">
          <section class="dock upper">
            ${this.dockTitle("Project Manager")}
            <div class="frame raised"><tree-view class="field sunken" tall .rows=${this.projectRows}></tree-view></div>
            <div class="tabs"><button class="tab">Project</button></div>
          </section>
          <section class="dock lower">
            ${this.dockTitle("Properties")}
            <div class="frame raised">
              <div class="field sunken">
                <div class="grid-wrap">
                  <table>
                    <colgroup><col width="116" /><col width="132" /><col width="44" /><col width="60" /></colgroup>
                    <thead><tr><th>Name</th><th>Value</th><th>Unit</th><th class="cut">Ev</th></tr></thead>
                    <tbody>
                      <tr><td>Name</td><td>Rectangle2</td><td></td><td></td></tr>
                      <tr><td>Orientation</td><td>Global</td><td></td><td></td></tr>
                      <tr>
                        <td><label for="model">Model</label></td>
                        <td><input id="model" class="check sunken" type="checkbox" .checked=${this.showModel}
                          @change=${(e: Event) => (this.showModel = (e.target as HTMLInputElement).checked)} /></td>
                        <td></td><td></td>
                      </tr>
                      <tr><td><label for="wire">Display Wireframe</label></td><td><input id="wire" class="check sunken" type="checkbox" /></td><td></td><td></td></tr>
                      <tr><td>Color</td><td><button class="swatch" aria-label="Color"></button></td><td></td><td></td></tr>
                      <tr><td>Transparent</td><td><button class="amount raised">0.8</button></td><td></td><td></td></tr>
                    </tbody>
                  </table>
                </div>
                <div class="scroll">
                  <button aria-label="Scroll left"><svg width="7" height="8" viewBox="0 0 7 8"><path d="M6 0l-4 4l4 4" stroke="#505050" stroke-width="2" /></svg></button>
                  <div class="track"><div class="thumb"></div></div>
                  <button aria-label="Scroll right"><svg width="7" height="8" viewBox="0 0 7 8"><path d="M1 0l4 4l-4 4" stroke="#505050" stroke-width="2" /></svg></button>
                </div>
              </div>
            </div>
            <div class="tabs"><button class="tab">Attribute</button><div class="tab-fill"></div></div>
          </section>
        </div>
        <div class="edge"></div>
        <tree-view class="history sunken" .rows=${this.historyRows}></tree-view>
        <model-canvas class="view sunken"></model-canvas>
      </main>

      <div class="bottom">
        <section class="pane messages">${this.strip("Message Manager")}<div class="log flat" role="log"></div></section>
        <section class="pane progress">${this.strip("Progress")}<div class="log sunken"></div></section>
      </div>

      <footer class="status">
        <span class="hint">Copy and mirror the selection</span>
        <span class="cell"></span><span class="cell num">NUM</span><span class="cell end"></span>
      </footer>

      <popup-menu class="context" .entries=${this.contextEntries}></popup-menu>
      <popup-menu class="edit" .entries=${this.editEntries}></popup-menu>
      <popup-menu class="duplicate" .entries=${this.duplicateEntries}></popup-menu>
    `;
  }
}
